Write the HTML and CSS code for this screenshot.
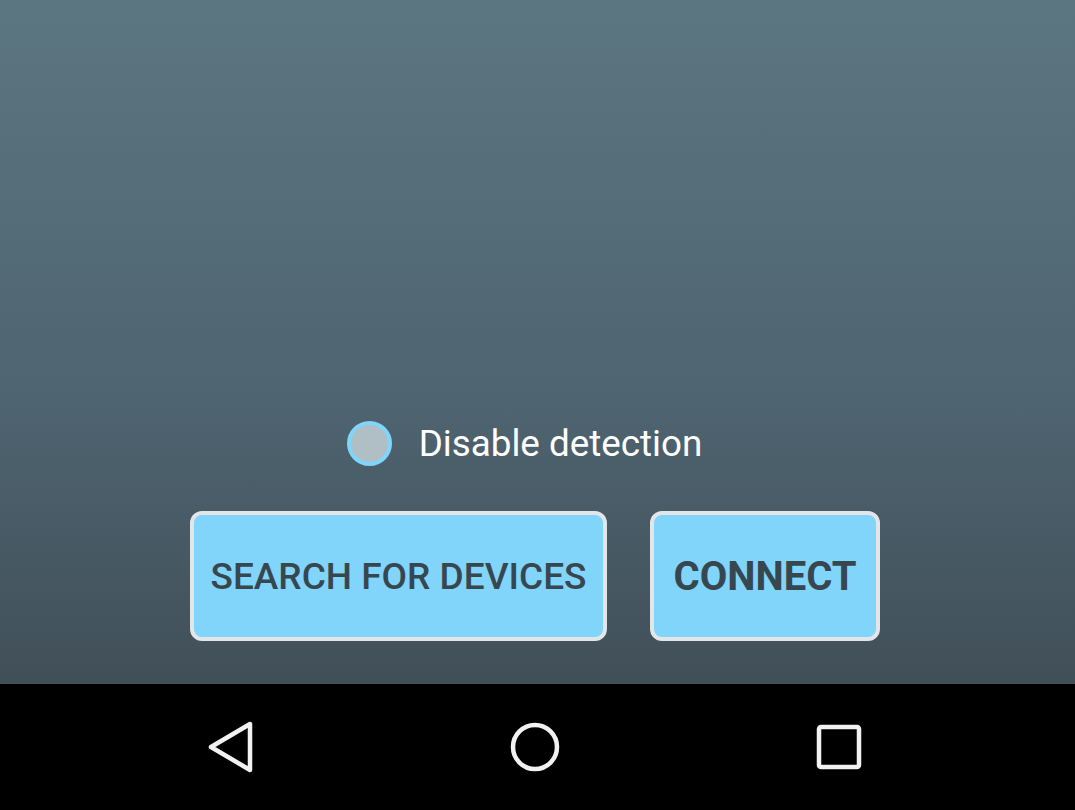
FILE: index.html
```html
<!DOCTYPE html>
<html>
<head>
<meta charset="utf-8">
<link rel="stylesheet" href="styles.css">
</head>
<body>
<div class="screen">
  <main class="content">
    <label class="radio-row">
      <span class="radio"></span>
      <span class="radio-label">Disable detection</span>
    </label>
    <div class="buttons">
      <button class="btn btn-search">SEARCH FOR DEVICES</button>
      <button class="btn btn-connect">CONNECT</button>
    </div>
  </main>
  <nav class="navbar">
    <svg class="nav-icon" width="60" height="60" viewBox="0 0 60 60">
      <path d="M49 7 L49 53 L10 30 Z" fill="none" stroke="#f2f2f2" stroke-width="4.5" stroke-linejoin="round"/>
    </svg>
    <svg class="nav-icon" width="60" height="60" viewBox="0 0 60 60">
      <circle cx="30" cy="30" r="22" fill="none" stroke="#f2f2f2" stroke-width="4.5"/>
    </svg>
    <svg class="nav-icon" width="60" height="60" viewBox="0 0 60 60">
      <rect x="10" y="10" width="40" height="40" rx="2" fill="none" stroke="#f2f2f2" stroke-width="4.5"/>
    </svg>
  </nav>
</div>
</body>
</html>
```

FILE: styles.css
```css
html, body {
  margin: 0;
  padding: 0;
}
body {
  width: 1075px;
  height: 810px;
  overflow: hidden;
  font-family: Roboto, "Liberation Sans", sans-serif;
}
.screen {
  display: flex;
  flex-direction: column;
  height: 810px;
}
.content {
  height: 684px;
  background: linear-gradient(to bottom, #5b7581 0%, #4f6672 55%, #414f58 100%);
  display: flex;
  flex-direction: column;
  align-items: center;
  justify-content: flex-end;
  padding-bottom: 43px;
  padding-right: 5px;
  box-sizing: border-box;
}
.radio-row {
  display: flex;
  align-items: center;
  gap: 27px;
  margin-bottom: 45px;
  margin-left: -21px;
}
.radio {
  width: 37px;
  height: 37px;
  border-radius: 50%;
  border: 4px solid #81d4fa;
  background: #b0bec5;
}
.radio-label {
  color: #ffffff;
  font-size: 36.8px;
  line-height: 44px;
}
.buttons {
  display: flex;
  gap: 43px;
}
.btn {
  height: 130px;
  border: 4px solid #e3e6e8;
  border-radius: 12px;
  background: #81d4fa;
  color: #37474f;
  font-family: Roboto, "Liberation Sans", sans-serif;
  padding: 0;
  box-sizing: border-box;
  display: flex;
  align-items: center;
  justify-content: center;
}
.btn-search {
  width: 417px;
  font-size: 37px;
  font-weight: 500;
}
.btn-connect {
  width: 230px;
  font-size: 40px;
  font-weight: 700;
}
.navbar {
  height: 126px;
  background: #000;
  display: flex;
  align-items: center;
  justify-content: center;
  gap: 244px;
  padding-right: 6px;
}
.nav-icon {
  display: block;
}
```
